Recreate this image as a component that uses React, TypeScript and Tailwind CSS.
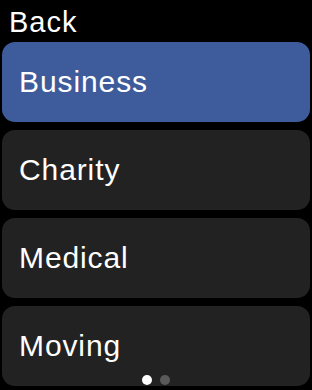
const items = [
  { label: 'Business', active: true },
  { label: 'Charity', active: false },
  { label: 'Medical', active: false },
  { label: 'Moving', active: false },
];

export default function App() {
  return (
    <div
      className="relative h-[390px] w-[312px] overflow-hidden bg-black text-white"
      style={{ fontFamily: '"Liberation Sans", Arial, sans-serif' }}
    >
      <div className="flex h-[42px] items-center pl-[9px] pt-[2px] text-[29px] leading-none tracking-[1px]">
        Back
      </div>
      <div className="flex flex-col gap-[8px] px-[2px]">
        {items.map((item) => (
          <div
            key={item.label}
            className={`flex h-[80px] items-center rounded-[13px] pl-[17px] text-[30px] leading-none tracking-[0.9px] ${
              item.active ? 'bg-[#3e5b9b]' : 'bg-[#222222]'
            }`}
          >
            {item.label}
          </div>
        ))}
      </div>
      <div className="absolute bottom-[5px] left-0 right-0 flex justify-center gap-[8px] pr-[1px]">
        <span className="h-[10px] w-[10px] rounded-full bg-white" />
        <span className="h-[10px] w-[10px] rounded-full bg-[#5a5a5a]" />
      </div>
    </div>
  );
}
